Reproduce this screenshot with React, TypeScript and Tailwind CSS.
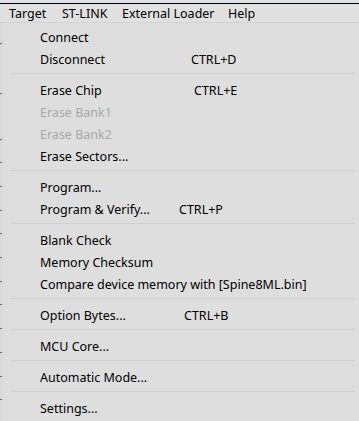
import React from 'react';

type Item =
  | { kind: 'sep' }
  | { kind: 'item'; label: string; shortcut?: string; labelW?: string; disabled?: boolean };

const items: Item[] = [
  { kind: 'item', label: 'Connect' },
  { kind: 'item', label: 'Disconnect', shortcut: 'CTRL+D', labelW: 'w-[151px]' },
  { kind: 'sep' },
  { kind: 'item', label: 'Erase Chip', shortcut: 'CTRL+E', labelW: 'w-[154px]' },
  { kind: 'item', label: 'Erase Bank1', disabled: true },
  { kind: 'item', label: 'Erase Bank2', disabled: true },
  { kind: 'item', label: 'Erase Sectors...' },
  { kind: 'sep' },
  { kind: 'item', label: 'Program...' },
  { kind: 'item', label: 'Program & Verify...', shortcut: 'CTRL+P', labelW: 'w-[139px]' },
  { kind: 'sep' },
  { kind: 'item', label: 'Blank Check' },
  { kind: 'item', label: 'Memory Checksum' },
  { kind: 'item', label: 'Compare device memory with [Spine8ML.bin]' },
  { kind: 'sep' },
  { kind: 'item', label: 'Option Bytes...', shortcut: 'CTRL+B', labelW: 'w-[144px]' },
  { kind: 'sep' },
  { kind: 'item', label: 'MCU Core...' },
  { kind: 'sep' },
  { kind: 'item', label: 'Automatic Mode...' },
  { kind: 'sep' },
  { kind: 'item', label: 'Settings...' },
];

const ticks = [44, 94, 140, 163, 187, 211, 234, 258, 282, 305, 329, 353, 377, 400];

export default function App() {
  return (
    <div
      className="w-[359px] h-[421px] overflow-hidden bg-[#dfdfdf] text-black text-[12.5px] leading-none"
      style={{ fontFamily: '"Noto Sans", "Open Sans", sans-serif' }}
    >
      {/* window chrome above menu bar */}
      <div className="h-[3px] bg-[#dce2e8]" />
      <div className="h-[1px] bg-black" />

      {/* Menu bar */}
      <div className="h-[19px] pt-[3px] flex items-center border-b border-[#d3d3d3] bg-[#e0e0e0] whitespace-nowrap">
        <span className="ml-[9px] w-[53px]">Target</span>
        <span className="w-[60px]">ST-LINK</span>
        <span className="w-[106px]">External Loader</span>
        <span>Help</span>
      </div>

      <div className="flex">
        {/* strip of the window behind the menu */}
        <div className="w-[3px] h-[398px] bg-[#d9d9d9] relative">
          {ticks.map((t) => (
            <div key={t} className="absolute left-0 w-[2px] h-[1px] bg-[#6b6b6b]" style={{ top: t - 24 }} />
          ))}
        </div>

        {/* Dropdown */}
        <div className="flex-1 pt-[2px] bg-[#dedede]">
          {items.map((it, i) =>
            it.kind === 'sep' ? (
              <div key={i} className="h-[9px] flex items-center pl-[8px] pr-[4px]">
                <div className="h-[1px] w-full bg-[#cfcfcf]" />
              </div>
            ) : (
              <div key={i} className="h-[22px] pt-[4px] flex items-center pl-[37px]">
                <span className={`${it.labelW ?? ''} ${it.disabled ? 'text-[#a8a8a8]' : ''} whitespace-nowrap`}>
                  {it.label}
                </span>
                {it.shortcut && <span>{it.shortcut}</span>}
              </div>
            )
          )}
        </div>
      </div>
    </div>
  );
}
